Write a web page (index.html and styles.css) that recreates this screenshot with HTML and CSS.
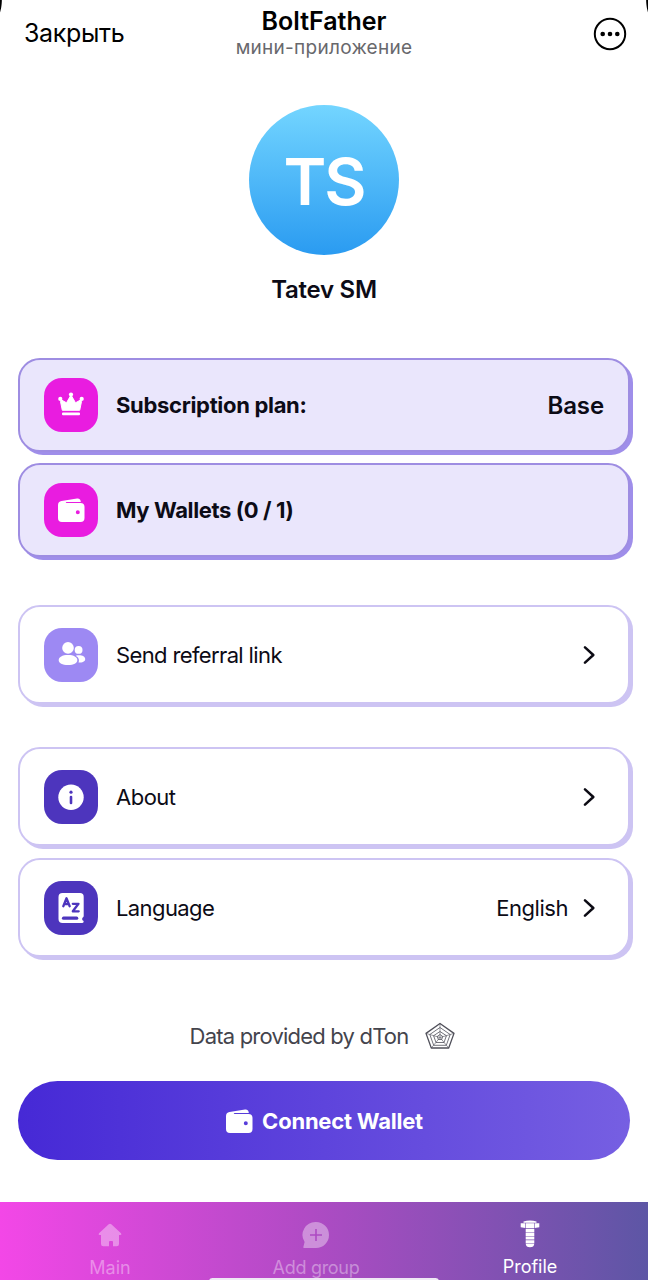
FILE: index.html
```html
<!DOCTYPE html>
<html lang="en">
<head>
<meta charset="utf-8">
<title>BoltFather</title>
<link rel="stylesheet" href="styles.css">
</head>
<body>
<svg class="defs" width="0" height="0" aria-hidden="true">
  <symbol id="wallet" viewBox="0 0 28 26">
    <path fill="currentColor" fill-rule="evenodd" d="M1 8.200C1 5.800 2.300 4.500 4.500 4.100L20 1.600c2-.3 3.400.6 3.700 2.600l.1.900H9.500c-1 0-1 .9 0 .9H23.500c2.700 0 4 1.300 4 3.800V21c0 2.700-1.300 4-4 4H5c-2.700 0-4-1.300-4-4ZM20.800 13.200a2 2 0 1 0 0 4 2 2 0 1 0 0-4Z"/>
  </symbol>
  <symbol id="chevron" viewBox="0 0 12 20">
    <path fill="none" stroke="#0c0b14" stroke-width="2.500" stroke-linecap="round" stroke-linejoin="round" d="m2 2.300 8.300 7.700-8.300 7.700"/>
  </symbol>
</svg>
<header class="topbar">
  <span class="close">Закрыть</span>
  <div class="heading">
    <h1 class="app-name">BoltFather</h1>
    <p class="app-kind">мини-приложение</p>
  </div>
  <svg class="more" viewBox="0 0 34 34"><circle cx="17" cy="17" r="15.200" fill="none" stroke="#000" stroke-width="2"/><circle cx="9.700" cy="17" r="2.300"/><circle cx="17" cy="17" r="2.300"/><circle cx="24.300" cy="17" r="2.300"/></svg>
</header>
<main class="page">
  <div class="avatar"><span class="initials">TS</span></div>
  <h2 class="name">Tatev SM</h2>
  <section class="group tinted">
    <div class="card">
      <span class="tile magenta"><svg viewBox="0 0 54 54"><g fill="#fff"><path d="M17.500 22 22.500 24.800 27 17 31.500 24.800 36.500 22 37.500 23.500 35.700 32.300H18.300L16.500 23.500Z" stroke="#fff" stroke-linejoin="round"/><circle cx="27" cy="16.600" r="2.100"/><circle cx="16.300" cy="20.900" r="2.100"/><circle cx="37.700" cy="20.900" r="2.100"/><rect x="18" y="34.400" width="18" height="2.800" rx="1"/></g></svg></span>
      <span class="label t-plan">Subscription plan:</span>
      <span class="value t-base">Base</span>
    </div>
    <div class="card">
      <span class="tile magenta"><svg class="wallet"><use href="#wallet"/></svg></span>
      <span class="label t-wallets">My Wallets (0 / 1)</span>
    </div>
  </section>
  <section class="group referral">
    <div class="card">
      <span class="tile lilac"><svg viewBox="0 0 54 54"><g fill="#fff"><circle cx="24" cy="19.900" r="5.800"/><circle cx="34.600" cy="21.900" r="3.900"/><path d="M24 26.900c5.800 0 9.300 2.100 9.300 5 0 3.300-3.600 5.100-9.300 5.100s-9.300-1.800-9.300-5.100c0-2.900 3.500-5 9.300-5Z"/><path d="M31.800 27.700c5-1.200 9.400.4 9.400 3.300 0 2.600-2.700 3.600-6.700 3.600 1.300-3-.1-5.300-2.700-6.900Z"/></g></svg></span>
      <span class="label t-ref">Send referral link</span>
      <svg class="chevron"><use href="#chevron"/></svg>
    </div>
  </section>
  <section class="group settings">
    <div class="card">
      <span class="tile indigo"><svg viewBox="0 0 54 54"><circle cx="27" cy="27.300" r="12.700" fill="#fff"/><circle cx="27" cy="22.200" r="1.600" fill="#4d35bd"/><path d="M27 27v6" stroke="#4d35bd" stroke-width="2.600" stroke-linecap="round"/></svg></span>
      <span class="label t-about">About</span>
      <svg class="chevron"><use href="#chevron"/></svg>
    </div>
    <div class="card">
      <span class="tile indigo"><svg viewBox="0 0 54 54"><path fill="#fff" d="M18.500 12H36q3.700 0 3.700 3.700V35q0 1.200-1.200 1.800-.8 1.300 0 2.500 1.200.3 1.200 1.400t-1.400 1.300H18.500q-4 0-4-4V16q0-4 4-4Z"/><path d="M19.500 37.200H32.700" stroke="#4d35bd" stroke-width="3.200" stroke-linecap="round"/><path fill="none" stroke="#4d35bd" stroke-width="2.300" stroke-linecap="round" stroke-linejoin="round" d="m19.300 25.300 3.200-8 3.200 8m-5.400-2.300h4.400M28.800 22.800H34.500L28.800 30.300H34.700"/></svg></span>
      <span class="label t-lang">Language</span>
      <span class="value t-eng">English</span>
      <svg class="chevron"><use href="#chevron"/></svg>
    </div>
  </section>
  <p class="credit"><span class="t-data">Data provided by dTon</span>
    <svg class="web" viewBox="0 0 30 28" fill="none" stroke="#50505a" stroke-linejoin="round"><path stroke-width="1.300" d="M15 1.500 29 11.400 23.700 26H6.300L1 11.400Z"/><path stroke-width=".8" d="M15 5.500 25.200 12.500 21.300 23.300H8.700L4.800 12.500ZM15 9.500 21.400 13.700 19 20.500H11L8.600 13.700ZM15 12.500l2.700 1.900-1 3.100h-3.400l-1-3.100Z"/><path stroke-width=".6" d="M15 1.500V15.500M29 11.400 15 15.500M23.700 26 15 15.500 6.300 26M1 11.400 15 15.500"/></svg>
  </p>
  <button class="connect"><svg class="wallet"><use href="#wallet"/></svg><span class="t-connect">Connect Wallet</span></button>
</main>
<nav class="tabs">
  <div class="tab">
    <svg class="tab-icon" viewBox="0 0 28 28"><path fill="currentColor" d="M12.700 3.300q1.300-1.100 2.600 0L25 12.300q1.200 1.500-.6 1.800H23V23q0 2.300-2.300 2.300H17V21q0-1-1-1H14q-1 0-1 1v4.300H7.300Q5 25.300 5 23V14.100H3.600q-1.800-.3-.6-1.800Z"/></svg>
    <span class="t-main">Main</span>
  </div>
  <div class="tab add">
    <svg class="tab-icon" viewBox="0 0 28 28"><path fill="currentColor" fill-rule="evenodd" d="M14 1A13 13 0 1 1 14 27H2q-1-.1-.6-1.200L2.600 21A13 13 0 0 1 14 1ZM13.200 8V13.200H8V14.800H13.200V20H14.800V14.800H20V13.200H14.800V8Z"/></svg>
    <span class="t-add">Add group</span>
  </div>
  <div class="tab active">
    <svg class="tab-icon" viewBox="0 0 28 28"><path fill="currentColor" d="M7.500 1.400Q14-.3 20.500 1.400V2.700H7.500ZM4.700 3.200H9.300V8L4.700 7.200ZM9.900 3.200H18.100V8.200H9.900ZM18.700 3.200H23.300V7.200L18.700 8ZM9.700 8.900H18.300V12.200H9.700ZM9.700 12.800H18.300V15.900H9.700ZM9.700 16.500H18.300V19.600H9.700ZM9.700 20.200H18.300V23.200H9.700ZM9.700 23.800H18.300Q18 27.300 14 27.300T9.700 23.800Z"/></svg>
    <span class="t-profile">Profile</span>
  </div>
  <i class="home-bar"></i>
</nav>
</body>
</html>
```
FILE: styles.css
```css
* { box-sizing: border-box; margin: 0; padding: 0; }
body { width: 648px; height: 1280px; overflow: hidden; display: flex; flex-direction: column; background: #fff; color: #0c0b16; font-family: Inter, "Noto Sans", sans-serif; font-size: 22px; }
span, h1, h2, p { white-space: nowrap; }
svg { display: block; flex: none; }
.defs { display: none; }
.topbar { height: 68px; display: grid; grid-template-columns: 1fr auto 1fr; color: #000; background: radial-gradient(ellipse 2px 13px at 0 0, #000 70%, transparent) left top / 50% 100% no-repeat, radial-gradient(ellipse 2px 13px at 100% 0, #000 70%, transparent) right top / 50% 100% no-repeat; }
.close { padding: 18px 0 0 24px; font-size: 25px; line-height: 30px; letter-spacing: -.35px; }
.heading { text-align: center; padding-top: 6px; }
.app-name { font-size: 25px; font-weight: 600; line-height: 30px; }
.app-kind { font-size: 19px; line-height: 24px; letter-spacing: .27px; color: #68686c; }
.more { width: 34px; height: 34px; margin: 17px 21px 0 auto; }
.page { flex: 1; display: flex; flex-direction: column; padding: 37px 18px 0; }
.avatar { width: 150px; height: 150px; border-radius: 50%; align-self: center; background: linear-gradient(#73d5ff, #2a9bf1); color: #fff; display: flex; align-items: center; justify-content: center; }
.initials { font-size: 65px; font-weight: 600; line-height: 80px; padding-top: 3px; letter-spacing: -2px; }
.name { align-self: center; margin-top: 19px; font-size: 24px; line-height: 32px; font-weight: 600; letter-spacing: -.25px; }
.group { display: flex; flex-direction: column; gap: 11px; }
.tinted { margin-top: 52px; }
.referral { margin-top: 48px; }
.settings { margin-top: 43px; gap: 12px; }
.card { height: 99px; border: 2px solid #cdc4f3; border-radius: 22px; box-shadow: 3px 3px 0 #cdc4f3; display: flex; align-items: center; padding: 0 33px 0 24px; background: #fff; }
.tinted .card { height: 94px; background: #eae6fc; border-color: #9e8de2; box-shadow: 3px 3px 0 #9f8eea; padding-right: 24px; font-weight: 700; }
.tile { width: 54px; height: 54px; border-radius: 18px; display: grid; place-items: center; color: #fff; }
.tile > svg { width: 54px; height: 54px; }
.wallet, .tile > .wallet { width: 28px; height: 26px; }
.magenta { background: #e91ce0; }
.lilac { background: #9d89f3; }
.indigo { background: #4d35bd; }
.label { margin-left: 18px; flex: 1; line-height: 30px; }
.chevron { width: 12px; height: 20px; }
.t-plan { letter-spacing: -.32px; }
.t-wallets { letter-spacing: -.38px; }
.t-ref { letter-spacing: -.63px; }
.t-about { letter-spacing: -.5px; }
.t-lang { letter-spacing: -.6px; }
.t-base { font-size: 24px; font-weight: 600; letter-spacing: -.1px; }
.t-eng { margin-right: 15px; letter-spacing: -.45px; }
.credit { margin-top: 61px; height: 36px; display: flex; align-items: center; gap: 17px; justify-content: center; padding-right: 3px; color: #44444c; }
.t-data { letter-spacing: -.8px; }
.web { width: 30px; height: 28px; }
.connect { margin-top: 27px; height: 79px; border: 0; border-radius: 40px; background: linear-gradient(90deg, #4629d6, #765fe2); color: #fff; display: flex; align-items: center; justify-content: center; gap: 9px; font: 700 22px Inter, sans-serif; }
.t-connect { letter-spacing: -.22px; }
.tabs { position: relative; height: 78px; display: grid; grid-template-columns: 220px 192px 236px; padding-top: 19px; background: linear-gradient(90deg, #f347e7, #af4bc4 48%, #5d56a5); font-size: 18px; }
.tab { display: flex; flex-direction: column; align-items: center; gap: 6px; line-height: 26px; color: rgba(255,255,255,.38); }
.tab-icon { width: 28px; height: 28px; }
.t-add { letter-spacing: -.3px; }
.active { color: #fff; gap: 5px; }
.active .tab-icon { margin-top: -1px; margin-bottom: 1px; }
.home-bar { position: absolute; left: 209px; top: 76px; width: 230px; height: 7px; border-radius: 4px; background: #efe9f5; }
```
